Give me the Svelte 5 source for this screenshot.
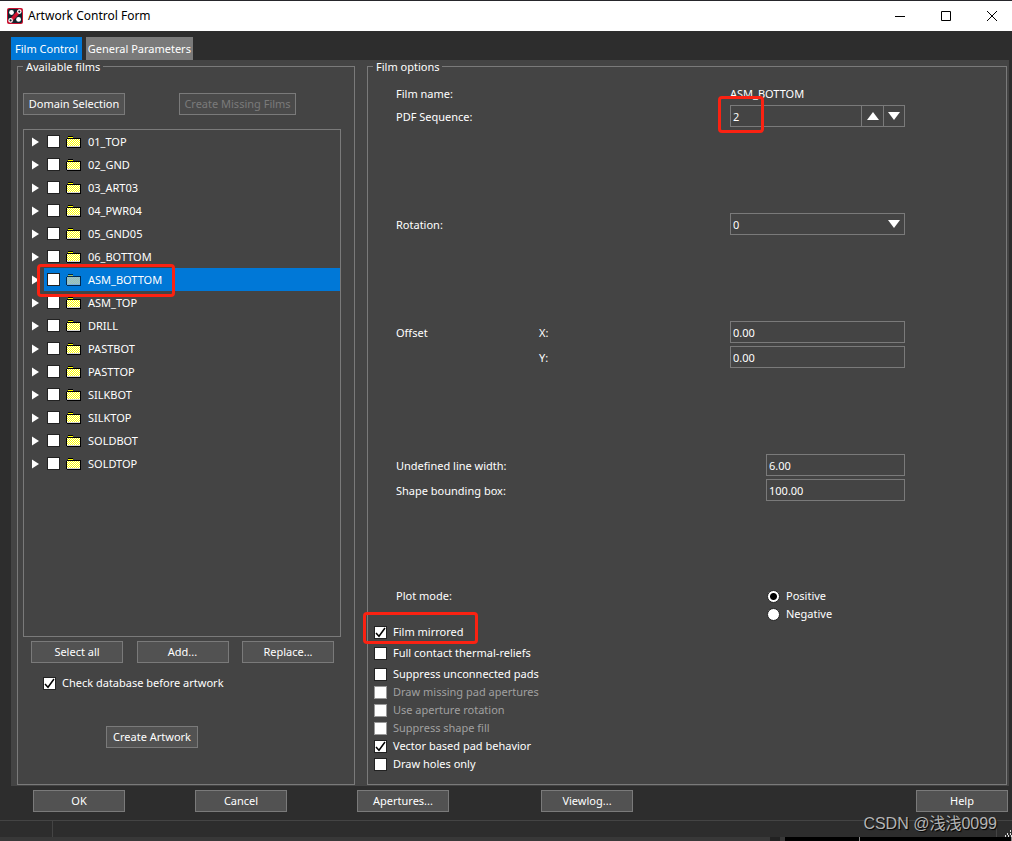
<script>
  const films = [
    '01_TOP', '02_GND', '03_ART03', '04_PWR04', '05_GND05',
    '06_BOTTOM', 'ASM_BOTTOM', 'ASM_TOP', 'DRILL', 'PASTBOT',
    'PASTTOP', 'SILKBOT', 'SILKTOP', 'SOLDBOT', 'SOLDTOP'
  ];
  let selected = $state('ASM_BOTTOM');
  let sequence = $state(2);
  let plotMode = $state('positive');
  let options = $state([
    { label: 'Film mirrored', checked: true, marked: true, spaced: true },
    { label: 'Full contact thermal-reliefs', checked: false, spaced: true },
    { label: 'Suppress unconnected pads', checked: false },
    { label: 'Draw missing pad apertures', checked: false, disabled: true },
    { label: 'Use aperture rotation', checked: false, disabled: true },
    { label: 'Suppress shape fill', checked: false, disabled: true },
    { label: 'Vector based pad behavior', checked: true },
    { label: 'Draw holes only', checked: false }
  ]);
</script>

<div class="window">
  <header class="titlebar">
    <svg class="logo" width="16" height="16" viewBox="0 0 16 16" aria-hidden="true">
      <rect width="16" height="16" rx="2" fill="#c8102e" />
      <path d="M2 1H12L1 13V2ZM15 3V14L14 15H4Z" fill="#10222c" />
      <path d="M5 11L11 5" stroke="#d3132f" stroke-width="2" />
      <circle cx="4.5" cy="4.5" r="2.4" fill="#fff" />
      <circle cx="11.6" cy="11.4" r="2.4" fill="#fff" />
      <circle cx="12.3" cy="3.6" r="1.7" fill="#10222c" stroke="#fff" stroke-width="1.2" />
      <circle cx="3.6" cy="12.4" r="1.7" fill="#10222c" stroke="#fff" stroke-width="1.2" />
    </svg>
    <h1>Artwork Control Form</h1>
    <div class="caption-buttons">
      <button aria-label="Minimize"><svg width="12" height="12" viewBox="0 0 12 12"><path d="M1 6.5H11" /></svg></button>
      <button aria-label="Maximize"><svg width="12" height="12" viewBox="0 0 12 12"><path d="M1.5 1.5H10.5V10.5H1.5Z" /></svg></button>
      <button aria-label="Close"><svg width="12" height="12" viewBox="0 0 12 12"><path d="M1 1L11 11M11 1L1 11" /></svg></button>
    </div>
  </header>

  <nav class="tabs">
    <button class="tab active">Film Control</button>
    <button class="tab general">General Parameters</button>
  </nav>

  <main class="panel">
    <fieldset class="available">
      <legend>Available films</legend>
      <div class="top-actions">
        <button class="btn domain">Domain Selection</button>
        <button class="btn missing" disabled>Create Missing Films</button>
      </div>
      <ul class="films">
        {#each films as film}
          <li>
            <button class="expand" aria-label="Expand {film}">
              <svg width="7" height="10" viewBox="0 0 7 10"><path d="M0 0.5L7 5L0 9.5Z" fill="#fff" /></svg>
            </button>
            <label class="film" class:selected={film === selected}>
              <input type="checkbox" />
              <svg class="folder" width="15" height="12" viewBox="0 0 15 12" shape-rendering="crispEdges" aria-hidden="true">
                <defs>
                  <pattern id="weave-{film}" width="2" height="2" patternUnits="userSpaceOnUse">
                    <rect width="2" height="2" fill={film === selected ? '#8fb8e0' : '#fff'} />
                    <path d="M1 0H2V1H1ZM0 1H1V2H0Z" fill={film === selected ? '#a0c8a0' : '#ff0'} />
                  </pattern>
                </defs>
                <path d="M2 0H7V1H2ZM1 2H14V3H1ZM14 2H15V12H14ZM1 11H15V12H1ZM0 3H1V11H0Z" fill={film === selected ? '#002a50' : '#000'} />
                <path d="M2 1H7V2H2Z" fill={film === selected ? '#9fc060' : '#ff0'} />
                <path d="M1 3H14V10H1Z" fill="url(#weave-{film})" />
                <path d="M1 10H14V11H1Z" fill={film === selected ? '#7ab0dc' : '#d8d8d8'} />
              </svg>
              <span>{film}</span>
              {#if film === 'ASM_BOTTOM'}<i class="mark mark-film"></i>{/if}
            </label>
          </li>
        {/each}
      </ul>
      <div class="list-actions">
        <button class="btn">Select all</button>
        <button class="btn">Add...</button>
        <button class="btn">Replace...</button>
      </div>
      <label class="check database"><input type="checkbox" checked />Check database before artwork</label>
      <button class="btn create">Create Artwork</button>
    </fieldset>

    <fieldset class="options">
      <legend>Film options</legend>
      <div class="row">
        <span>Film name:</span>
        <output class="wide">ASM_BOTTOM</output>
      </div>
      <div class="row section">
        <label for="sequence">PDF Sequence:</label>
        <div class="wide spinner">
          <input id="sequence" type="text" bind:value={sequence} />
          <button aria-label="Increase" onclick={() => (sequence = +sequence + 1)}>
            <svg width="12" height="8" viewBox="0 0 12 8"><path d="M6 0L12 8H0Z" fill="#fff" /></svg>
          </button>
          <button aria-label="Decrease" onclick={() => (sequence = +sequence - 1)}>
            <svg width="12" height="8" viewBox="0 0 12 8"><path d="M0 0H12L6 8Z" fill="#fff" /></svg>
          </button>
          <i class="mark mark-sequence"></i>
        </div>
      </div>
      <div class="row section">
        <label for="rotation">Rotation:</label>
        <select id="rotation" class="wide"><option>0</option><option>90</option><option>180</option><option>270</option></select>
      </div>
      <div class="row stacked">
        <span>Offset</span>
        <label for="offset-x">X:</label>
        <input id="offset-x" class="wide" type="text" value="0.00" />
      </div>
      <div class="row section">
        <span></span>
        <label for="offset-y">Y:</label>
        <input id="offset-y" class="wide" type="text" value="0.00" />
      </div>
      <div class="row stacked">
        <label for="line-width">Undefined line width:</label>
        <input id="line-width" class="narrow" type="text" value="6.00" />
      </div>
      <div class="row section">
        <label for="bounding-box">Shape bounding box:</label>
        <input id="bounding-box" class="narrow" type="text" value="100.00" />
      </div>
      <div class="row plot" role="radiogroup" aria-labelledby="plot-label">
        <span id="plot-label">Plot mode:</span>
        <div class="narrow modes">
          <label class="check"><input type="radio" name="plot" value="positive" bind:group={plotMode} />Positive</label>
          <label class="check"><input type="radio" name="plot" value="negative" bind:group={plotMode} />Negative</label>
        </div>
      </div>
      <div class="checks">
        {#each options as option}
          <label class="check" class:spaced={option.spaced} class:off={option.disabled}>
            <input type="checkbox" bind:checked={option.checked} disabled={option.disabled} />{option.label}
            {#if option.marked}<i class="mark mark-mirrored"></i>{/if}
          </label>
        {/each}
      </div>
    </fieldset>
  </main>

  <footer class="dialog-actions">
    <button class="btn">OK</button>
    <button class="btn">Cancel</button>
    <button class="btn">Apertures...</button>
    <button class="btn viewlog">Viewlog...</button>
    <button class="btn help">Help</button>
  </footer>

  <div class="statusbar">
    <span class="cell"></span>
    <span class="message"></span>
    <svg width="15" height="17" viewBox="0 0 15 17" fill="#ddd" shape-rendering="crispEdges" aria-hidden="true">
      <path d="M13 9h1v2h-1zM10 12h1v2h-1zM13 12h1v2h-1zM8 14h1v2H8zM11 14h1v2h-1zM14 14h1v2h-1z" />
    </svg>
    <span class="watermark">CSDN @浅浅0099</span>
  </div>
  <div class="backdrop"><span class="seam"></span><span class="dark"></span><span class="edge"></span></div>
</div>

<style>
  :global(body) {
    margin: 0;
    background: #2d2d2d;
  }
  .window {
    display: flex;
    flex-direction: column;
    min-height: 100vh;
    box-sizing: border-box;
    border-top: 1px solid #26262b;
    background: #2d2d2d;
    color: #fff;
    font: 11px/14px "Noto Sans", "Open Sans", sans-serif;
    overflow: hidden;
  }
  .window *, .window *::before {
    box-sizing: border-box;
  }
  button, input, select {
    font: inherit;
    color: inherit;
    margin: 0;
    border-radius: 0;
  }
  svg {
    display: block;
    flex: none;
  }
  .titlebar {
    display: flex;
    align-items: center;
    height: 30px;
    padding-left: 7px;
    background: #fff;
    color: #000;
  }
  h1 {
    flex: 1;
    margin: 0 0 0 5px;
    font: 12px/16px "Noto Sans", "Open Sans", sans-serif;
  }
  .caption-buttons {
    display: flex;
  }
  .caption-buttons button {
    display: grid;
    place-items: center;
    width: 46px;
    height: 30px;
    padding: 0 0 0 6px;
    border: 0;
    background: none;
  }
  .caption-buttons path {
    fill: none;
    stroke: #000;
  }
  .tabs {
    display: flex;
    gap: 4px;
    padding: 6px 11px 0;
  }
  .tab {
    height: 23px;
    padding: 0 4px;
    border: 0;
    background: #7a7a7a;
    white-space: nowrap;
  }
  .tab.active {
    background: #0078d7;
  }
  .tab.general {
    padding: 0 2px;
  }
  .panel {
    flex: 1;
    display: flex;
    gap: 12px;
    margin: 0 3px 0 11px;
    padding: 0 2px 1px 6px;
    background: #444;
  }
  fieldset {
    display: flex;
    flex-direction: column;
    min-width: 0;
    margin: 0;
    border: 1px solid #7a7a7a;
  }
  legend {
    height: 13px;
    margin-left: 5px;
    padding: 0 3px;
    line-height: 14px;
  }
  .available {
    flex: none;
    width: 338px;
    padding: 20px 13px 36px 5px;
  }
  .available legend {
    margin-left: 0;
  }
  .options {
    flex: 1;
    padding: 10px 0 11px;
  }
  .btn {
    width: 92px;
    height: 22px;
    padding: 0;
    border: 1px solid #7a7a7a;
    background: #525252;
    text-align: center;
    white-space: nowrap;
  }
  .btn:disabled {
    background: #4a4a4a;
    color: #7a7a7a;
  }
  .top-actions {
    display: flex;
    gap: 54px;
  }
  .btn.domain {
    width: 102px;
  }
  .btn.missing {
    width: 117px;
  }
  .films {
    flex: 1;
    margin: 14px 0 4px;
    padding: 0;
    border: 1px solid #7a7a7a;
    list-style: none;
  }
  .films li {
    display: flex;
    height: 23px;
  }
  .expand {
    display: flex;
    align-items: center;
    width: 20px;
    padding: 0 0 0 8px;
    border: 0;
    background: none;
  }
  .film {
    position: relative;
    flex: 1;
    display: flex;
    align-items: center;
    padding-left: 3px;
  }
  .film.selected {
    background: #0078d7;
  }
  .folder {
    margin: 0 7px 0 6px;
  }
  .list-actions {
    display: flex;
    justify-content: space-between;
    padding: 0 7px 0 8px;
  }
  .check {
    position: relative;
    display: flex;
    align-items: center;
    gap: 6px;
    height: 18px;
    white-space: nowrap;
  }
  .database {
    margin: 11px 0 34px 20px;
  }
  .create {
    margin-left: 83px;
  }
  input[type='checkbox'], input[type='radio'] {
    appearance: none;
    flex: none;
    width: 13px;
    height: 13px;
    border: 1px solid #222;
    background: #fff center / 11px 11px no-repeat;
  }
  input[type='checkbox']:checked {
    background-image: url("data:image/svg+xml,%3Csvg xmlns='http://www.w3.org/2000/svg' viewBox='0 0 11 11'%3E%3Cpath d='M1 6L4 9.300L10 1' fill='none' stroke='%23000' stroke-width='1.500'/%3E%3C/svg%3E");
  }
  input[type='checkbox']:disabled {
    border-color: #999;
  }
  input[type='radio'] {
    border-radius: 50%;
  }
  input[type='radio']:checked {
    background-image: radial-gradient(circle, #000 3px, transparent 4px);
  }
  .off {
    color: #a0a0a0;
  }
  .row {
    display: grid;
    grid-template-columns: 143px 191px 36px 139px;
    align-items: center;
    min-height: 22px;
    padding-left: 28px;
    white-space: nowrap;
  }
  .row > label, .stacked > span {
    padding-top: 2px;
  }
  .section {
    margin-bottom: 86px;
  }
  .stacked {
    margin-bottom: 3px;
  }
  .wide {
    grid-column: 3 / 5;
  }
  .narrow {
    grid-column: 4;
  }
  .modes {
    padding-left: 1px;
  }
  input[type='text'], select {
    height: 22px;
    min-width: 0;
    padding: 1px 2px 0;
    border: 1px solid #7a7a7a;
    background: transparent;
    outline: 0;
  }
  select {
    appearance: none;
    background: url("data:image/svg+xml,%3Csvg xmlns='http://www.w3.org/2000/svg' viewBox='0 0 12 8'%3E%3Cpath d='M0 0H12L6 8Z' fill='%23fff'/%3E%3C/svg%3E") right 4px center / 12px 8px no-repeat;
  }
  .spinner {
    position: relative;
    display: flex;
  }
  .spinner input {
    flex: 1;
  }
  .spinner button {
    display: grid;
    place-items: center;
    width: 22px;
    height: 22px;
    padding: 0;
    border: 1px solid #7a7a7a;
    border-left: 0;
    background: none;
  }
  .spinner button:last-of-type {
    width: 21px;
  }
  .plot {
    align-items: start;
  }
  .plot > span {
    line-height: 18px;
  }
  .checks {
    padding-left: 6px;
  }
  .spaced {
    margin-bottom: 3px;
  }
  .mark {
    position: absolute;
    z-index: 1;
    border: 3px solid #fb2212;
    border-radius: 4px;
    pointer-events: none;
  }
  .mark-film {
    left: -7px;
    top: -4px;
    width: 138px;
    height: 33px;
  }
  .mark-sequence {
    left: -12px;
    top: -9px;
    width: 46px;
    height: 37px;
  }
  .mark-mirrored {
    left: -11px;
    top: -11px;
    width: 115px;
    height: 32px;
  }
  .dialog-actions {
    display: flex;
    padding: 4px 4px 8px 33px;
    gap: 70px;
  }
  .viewlog {
    margin-left: 22px;
  }
  .help {
    margin-left: auto;
  }
  .statusbar {
    position: relative;
    display: flex;
    height: 17px;
    border-top: 1px solid #444;
  }
  .cell {
    width: 53px;
    border-right: 1px solid #444;
  }
  .message {
    flex: 1;
    border-right: 1px solid #444;
  }
  .watermark {
    position: absolute;
    right: 15px;
    top: -9px;
    color: #b4b4b4;
    font: 16px/24px "Liberation Sans", "Noto Sans CJK SC", sans-serif;
    text-shadow: 1px 1px 1px #000;
  }
  .backdrop {
    display: flex;
    height: 4px;
    background: #383838;
  }
  .seam {
    flex: 1;
    border-right: 10px solid #222;
  }
  .dark {
    width: 75px;
    margin-left: 5px;
    border-right: 1px solid #888;
    background: #000;
  }
  .edge {
    width: 152px;
    border-right: 1px solid #888;
    background: #000;
  }
</style>
